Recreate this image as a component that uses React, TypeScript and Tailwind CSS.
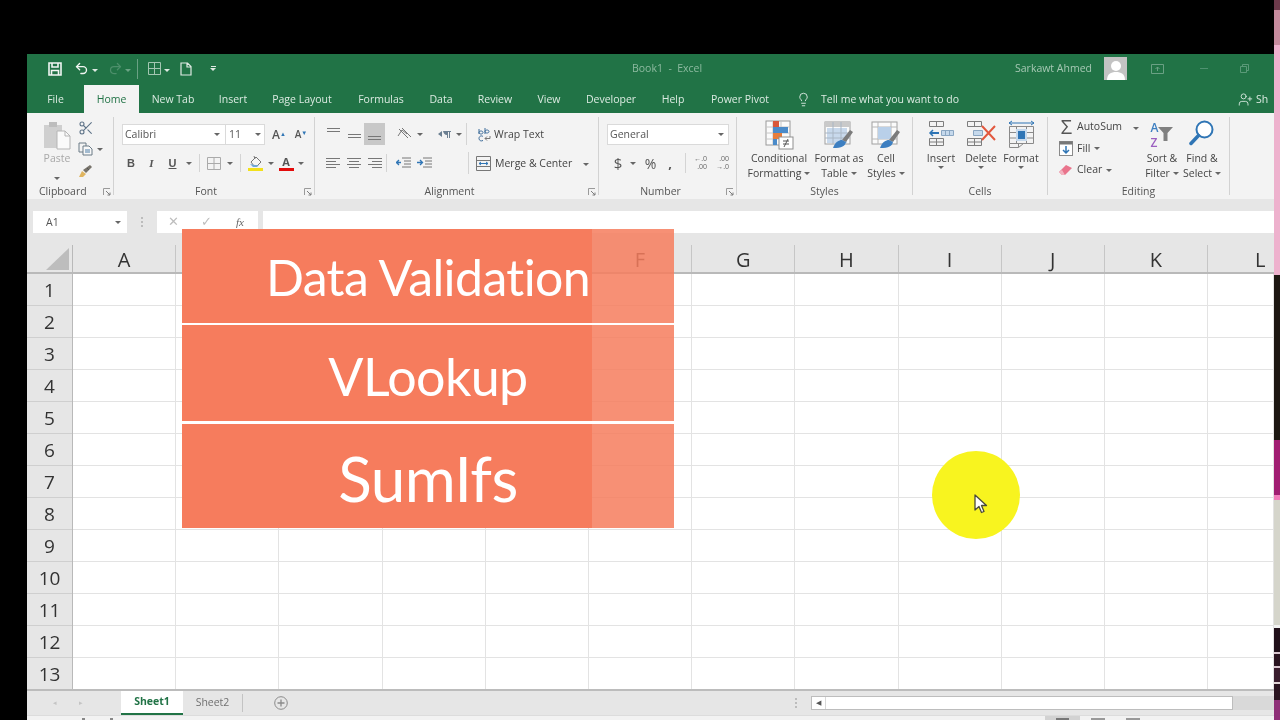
import React from "react";
import { Scissors, Undo2, Redo2, Lightbulb, UserPlus } from "lucide-react";

const ui = { fontFamily: '"Open Sans", "Noto Sans", sans-serif' };

const tabs = [
  { label: "File", w: "w-[57px]" },
  { label: "Home", w: "w-[55px]", active: true },
  { label: "New Tab", w: "w-[68px]" },
  { label: "Insert", w: "w-[52px]" },
  { label: "Page Layout", w: "w-[86px]" },
  { label: "Formulas", w: "w-[72px]" },
  { label: "Data", w: "w-[48px]" },
  { label: "Review", w: "w-[60px]" },
  { label: "View", w: "w-[48px]" },
  { label: "Developer", w: "w-[76px]" },
  { label: "Help", w: "w-[48px]" },
  { label: "Power Pivot", w: "w-[86px]" },
];

// B to E sit under the title card in the reference, so their letters never show
const columns = ["A", "", "", "", "", "F", "G", "H", "I", "J", "K", "L"];
const rows = [1, 2, 3, 4, 5, 6, 7, 8, 9, 10, 11, 12, 13];

function Caret({ light }: { light?: boolean }) {
  return (
    <span
      className={`inline-block w-0 h-0 border-x-[3px] border-x-transparent border-t-[3px] ${
        light ? "border-t-[#dfeae3]" : "border-t-[#666]"
      }`}
    />
  );
}

function Launcher() {
  return (
    <svg width="8" height="8" viewBox="0 0 8 8" fill="none">
      <path d="M0.5 7V0.5H7" stroke="#9a9a9a" />
      <path d="M3 3l4 4M7 4.5V7H4.5" stroke="#7d7d7d" />
    </svg>
  );
}

function Lines({ rows: r }: { rows: number[] }) {
  return (
    <svg width="15" height="14" viewBox="0 0 15 14">
      {r.map((y, i) => (
        <rect key={i} x={1} y={y} width="13" height="1" fill="#777" />
      ))}
    </svg>
  );
}

function AlignLines({ kind }: { kind: "l" | "c" | "r" }) {
  const xs = { l: [0, 0, 0, 0], c: [0, 2, 0, 2], r: [0, 4, 0, 4] }[kind];
  const ws = [14, 10, 14, 10];
  return (
    <svg width="14" height="12" viewBox="0 0 14 12">
      {xs.map((x, i) => (
        <rect key={i} x={x} y={1 + i * 3} width={ws[i]} height="1" fill="#777" />
      ))}
    </svg>
  );
}

function Sep({ h = "h-[18px]" }: { h?: string }) {
  return <div className={`w-px ${h} bg-[#d4d4d4]`} />;
}

function GroupLabel({ children, launcher, pad }: { children: React.ReactNode; launcher?: boolean; pad?: string }) {
  return (
    <div className={`h-[15px] flex items-center text-[10.5px] text-[#555] relative ${pad ?? "justify-center"}`}>
      <span>{children}</span>
      {launcher && (
        <span className="absolute right-[2px] top-[4px]">
          <Launcher />
        </span>
      )}
    </div>
  );
}

function Group({
  w,
  label,
  launcher,
  labelPad,
  children,
}: {
  w: string;
  label: string;
  launcher?: boolean;
  labelPad?: string;
  children: React.ReactNode;
}) {
  return (
    <div className={`${w} h-full flex shrink-0`}>
      <div className="flex-1 flex flex-col min-w-0">
        <div className="h-[71px]">{children}</div>
        <GroupLabel launcher={launcher} pad={labelPad}>
          {label}
        </GroupLabel>
      </div>
      <div className="w-px h-[78px] mt-[4px] bg-[#d2d2d2]" />
    </div>
  );
}

function PasteIcon() {
  return (
    <svg width="28" height="30" viewBox="0 0 28 30" fill="none">
      <rect x="1" y="5" width="18" height="23" fill="#cfcfcf" />
      <rect x="6" y="2" width="8" height="5" fill="#bdbdbd" />
      <path d="M14 11h8l5 5v13H14z" fill="#fafafa" stroke="#b5b5b5" />
      <path d="M22 11v5h5" stroke="#b5b5b5" />
    </svg>
  );
}

function CopyIcon() {
  return (
    <svg width="15" height="14" viewBox="0 0 15 14" fill="none" stroke="#6a7a86">
      <path d="M1 1h7v9H1z" fill="#f3f3f3" />
      <path d="M5 4h6l3 3v6H5z" fill="#f8f8f8" />
      <path d="M7 8h5M7 10h5" stroke="#4f7fa8" />
    </svg>
  );
}

function BrushIcon() {
  return (
    <svg width="16" height="14" viewBox="0 0 16 14">
      <path d="M1 13l3-6 4 3-3 3z" fill="#e0b560" />
      <path d="M5 6l3 3 6-6-2-2z" fill="#77736a" />
      <path d="M9 4l2 2" stroke="#555" />
    </svg>
  );
}

function FillIcon() {
  return (
    <svg width="16" height="17" viewBox="0 0 16 17" fill="none">
      <path d="M3 7l5-5 5 5-4 4H6z" fill="#f6f6f6" stroke="#777" />
      <path d="M6 1l1 3" stroke="#777" />
      <path d="M2 9c2 0 6 2 9 1l-2 2H5z" fill="#6fa7d8" />
      <rect x="0" y="13" width="15" height="3" fill="#f2e01b" />
    </svg>
  );
}

function ConditionalIcon() {
  return (
    <svg width="30" height="30" viewBox="0 0 30 30" fill="none">
      <rect x="2" y="1" width="24" height="24" fill="#fbfbfb" stroke="#9a9a9a" />
      <path d="M2 7h24M2 13h24M2 19h24M9 1v24M17 1v24" stroke="#c6c6c6" />
      <rect x="9" y="1" width="6" height="6" fill="#d8583b" />
      <rect x="9" y="7" width="15" height="6" fill="#4b8bc9" />
      <rect x="9" y="13" width="9" height="6" fill="#e77d3c" />
      <rect x="9" y="19" width="4" height="6" fill="#4b8bc9" />
      <rect x="15" y="17" width="14" height="12" fill="#fff" stroke="#8f8f8f" />
      <path d="M19 21h6M19 24h6M24 19l-4 8" stroke="#555" />
    </svg>
  );
}

function TableBrushIcon() {
  return (
    <svg width="30" height="30" viewBox="0 0 30 30" fill="none">
      <rect x="1" y="2" width="25" height="22" fill="#fbfbfb" stroke="#a0a0a0" />
      <rect x="1" y="2" width="25" height="5" fill="#c9c9c9" />
      <rect x="3" y="8" width="20" height="15" fill="#c8d9ec" />
      <path d="M1 13h25M1 18h25M9 2v22M17 2v22" stroke="#a9b6c4" />
      <path d="M18 20l8-10 3 2-7 10z" fill="#7b7b7b" />
      <path d="M9 28c2-6 6-8 9-8l4 2c-1 4-4 6-13 6z" fill="#3d7fc1" />
    </svg>
  );
}

function CellStyleIcon() {
  return (
    <svg width="30" height="30" viewBox="0 0 30 30" fill="none">
      <rect x="1" y="2" width="25" height="22" fill="#fbfbfb" stroke="#a0a0a0" />
      <path d="M1 7h25M1 19h25M7 2v22M20 2v22" stroke="#b7b7b7" />
      <rect x="7" y="7" width="13" height="12" fill="#b9d0e9" />
      <path d="M18 20l8-10 3 2-7 10z" fill="#7b7b7b" />
      <path d="M9 28c2-6 6-8 9-8l4 2c-1 4-4 6-13 6z" fill="#3d7fc1" />
    </svg>
  );
}

function InsertIcon() {
  return (
    <svg width="27" height="27" viewBox="0 0 27 27" fill="none" stroke="#7d7d7d">
      <path d="M1.5 1.5h14v5h-14zM8.5 1.5v5M1.5 18.5h14v7h-14zM1.5 22h14M8.5 18.5v7" />
      <path d="M13.5 10.5h12v5h-12z" fill="#c6d9ec" stroke="#8aa6c2" />
      <path d="M17.5 10.5v5M21.5 10.5v5" stroke="#8aa6c2" />
      <path d="M2 13h9" stroke="#2f75b5" strokeWidth="2" />
      <path d="M5 10l-3 3 3 3" stroke="#2f75b5" strokeWidth="1.5" />
    </svg>
  );
}

function DeleteIcon() {
  return (
    <svg width="30" height="27" viewBox="0 0 30 27" fill="none" stroke="#7d7d7d">
      <path d="M1.5 1.5h14v5h-14zM8.5 1.5v5M1.5 18.5h14v7h-14zM1.5 22h14M8.5 18.5v7" />
      <path d="M7.5 10.5h9v5h-9z" fill="#c6d9ec" stroke="#8aa6c2" />
      <path d="M16 6l13 14M29 6L16 20" stroke="#e2583e" strokeWidth="2" />
    </svg>
  );
}

function FormatIcon() {
  return (
    <svg width="27" height="30" viewBox="0 0 27 30" fill="none" stroke="#8a8a8a">
      <path d="M1.5 6.5h24v17h-24zM1.5 12.5h24M1.5 18h24M8.5 6.5v17M18.5 6.5v17" />
      <rect x="9" y="10" width="9" height="10" fill="#2f75b5" stroke="#c6d9ec" strokeWidth="2" />
      <path d="M1 3h25M4 1L1 3l3 2M23 1l3 2-3 2" stroke="#2f75b5" />
      <path d="M1.5 23.5v4h9v-4M10.5 27.5l5-4" />
    </svg>
  );
}

function WrapIcon() {
  return (
    <svg width="15" height="15" viewBox="0 0 15 15" fill="none">
      <path d="M2 7V2M2 5.500c0-2 4-2 4 0S2 7.500 2 5.500zM1 1h0" stroke="#3a6a99" />
      <path d="M8 1v6M8 4.500c0-2 4-2 4 0s-4 2-4 0z" stroke="#3a6a99" />
      <path d="M6 9.500c-2-1.500-4 0-4 2s2 3 4 2" stroke="#3a6a99" />
      <path d="M13 9v2.500H8M10 9.500l-2 2 2 2" stroke="#777" />
    </svg>
  );
}

function StackButton({
  w,
  icon,
  lines,
  caretOwn,
}: {
  w: string;
  icon: React.ReactNode;
  lines: string[];
  caretOwn?: boolean;
}) {
  return (
    <div className={`${w} shrink-0 flex flex-col items-center pt-[7px] text-[10.5px] leading-[15px] text-[#444] whitespace-nowrap`}>
      <div className="h-[30px] flex items-start justify-center">{icon}</div>
      <div className="mt-[1px]">{lines[0]}</div>
      <div className="flex items-center gap-[3px]">
        {lines[1] && <span>{lines[1]}</span>}
        {caretOwn && <Caret />}
      </div>
    </div>
  );
}

function Ribbon() {
  return (
    <div className="h-[86px] bg-[#f3f3f3] flex shrink-0">
      {/* Clipboard */}
      <Group w="w-[87px]" label="Clipboard" launcher labelPad="justify-start pl-[12px]">
        <div className="flex pl-[15px] pt-[7px]">
          <div className="w-[30px] flex flex-col items-center text-[10.5px] text-[#a8a8a8]">
            <PasteIcon />
            <span className="mt-[1px] leading-[15px]">Paste</span>
            <span className="mt-[3px]"><Caret /></span>
          </div>
          <div className="ml-[6px] flex flex-col gap-[4px]">
            <Scissors size={16} strokeWidth={1.6} className="text-[#5d7287]" />
            <div className="flex items-center gap-[4px] mt-[2px]">
              <CopyIcon />
              <Caret />
            </div>
            <div className="mt-[4px]"><BrushIcon /></div>
          </div>
        </div>
      </Group>

      {/* Font */}
      <Group w="w-[201px]" label="Font" launcher labelPad="justify-center pr-[16px]">
        <div className="pl-[8px] pt-[11px] text-[#555]">
          <div className="flex items-center h-[21px]">
            <div className="w-[104px] h-[21px] bg-white border border-[#dadada] flex items-center justify-between pl-[2px] pr-[5px] text-[10.5px]">
              <span>Calibri</span>
              <Caret />
            </div>
            <div className="w-[39px] h-[21px] bg-white border border-l-0 border-[#dadada] flex items-center justify-between pl-[3px] pr-[3px] text-[10.5px]">
              <span>11</span>
              <Caret />
            </div>
            <div className="w-[24px] ml-[2px] text-center text-[12px] font-semibold">A<sup className="text-[6px] text-[#2f75b5]">▲</sup></div>
            <div className="w-[20px] text-center text-[10px] font-semibold">A<sup className="text-[6px] text-[#2f75b5]">▼</sup></div>
          </div>
          <div className="flex items-center h-[22px] mt-[7px] text-[11px] font-bold">
            <span className="w-[18px] text-center" style={{ fontFamily: '"Liberation Sans", sans-serif' }}>B</span>
            <span className="w-[21px] ml-[1px] text-center italic" style={{ fontFamily: '"Liberation Serif", serif' }}>I</span>
            <span className="w-[21px] text-center underline" style={{ fontFamily: '"Liberation Sans", sans-serif' }}>U</span>
            <span className="w-[12px] flex justify-center"><Caret /></span>
            <span className="w-[5px] ml-[4px]"><Sep /></span>
            <svg className="ml-[3px]" width="14" height="13" viewBox="0 0 14 13" fill="none" stroke="#aaa">
              <path d="M.5.5h13v12H.5zM7 .5v12M.5 6.5h13" />
            </svg>
            <span className="w-[16px] ml-[1px] flex justify-center"><Caret /></span>
            <span className="w-[5px] ml-[2px]"><Sep /></span>
            <span className="ml-[3px]"><FillIcon /></span>
            <span className="w-[13px] flex justify-center"><Caret /></span>
            <span className="w-[16px] ml-[1px] flex flex-col items-center leading-[12px] text-[#555]">
              A
              <span className="block w-[15px] h-[3px] bg-[#e30b0b]" />
            </span>
            <span className="w-[14px] flex justify-center"><Caret /></span>
          </div>
        </div>
      </Group>

      {/* Alignment */}
      <Group w="w-[284px]" label="Alignment" launcher labelPad="justify-center pr-[14px]">
        <div className="pl-[11px] pt-[10px] text-[#444]">
          <div className="flex items-center h-[22px]">
            <span className="w-[14px]"><Lines rows={[1, 4]} /></span>
            <span className="w-[15px] ml-[7px] pt-[1px]"><Lines rows={[6, 9]} /></span>
            <span className="w-[21px] h-[22px] ml-[2px] bg-[#c8c8c8] flex items-center justify-center pt-[4px]"><Lines rows={[7, 10]} /></span>
            <svg className="ml-[12px]" width="16" height="14" viewBox="0 0 16 14" fill="none" stroke="#777">
              <path d="M2 2l9 9M5 1l9 9M1 9l4-6 5 4" />
            </svg>
            <span className="w-[12px] ml-[1px] flex justify-center"><Caret /></span>
            <span className="w-[12px]" />
            <svg width="14" height="10" viewBox="0 0 14 10" fill="#6b7f91">
              <path d="M0 5l4-3v6zM5 2h8v1h-1v6h-1V3h-1v6H9V6C6.500 6 5.500 4 5 2z" />
            </svg>
            <span className="w-[14px] flex justify-center"><Caret /></span>
            <span className="w-[11px] flex justify-start"><Sep h="h-[22px]" /></span>
            <div className="flex items-center gap-[2px] text-[10.5px] whitespace-nowrap">
              <WrapIcon />
              <span className="pt-[1px]">Wrap Text</span>
            </div>
          </div>
          <div className="flex items-center h-[22px] mt-[7px]">
            <span className="w-[14px]"><AlignLines kind="l" /></span>
            <span className="w-[14px] ml-[7px]"><AlignLines kind="c" /></span>
            <span className="w-[14px] ml-[7px]"><AlignLines kind="r" /></span>
            <span className="w-[7px] ml-[4px]"><Sep /></span>
            <svg width="15" height="12" viewBox="0 0 15 12" fill="none" className="ml-[3px]">
              <path d="M6 1h9M8 4h7M8 7h7M6 10h9" stroke="#777" />
              <path d="M0 5.500h5M3 3L0.500 5.500 3 8" stroke="#2f75b5" strokeWidth="1.3" />
            </svg>
            <svg width="15" height="12" viewBox="0 0 15 12" fill="none" className="ml-[6px]">
              <path d="M6 1h9M8 4h7M8 7h7M6 10h9" stroke="#777" />
              <path d="M0 5.500h5M3 3l2.500 2.500L3 8" stroke="#2f75b5" strokeWidth="1.3" />
            </svg>
            <span className="w-[5px] ml-[36px] flex justify-start"><Sep h="h-[22px]" /></span>
            <div className="ml-[3px] flex items-center gap-[4px] text-[10.5px] whitespace-nowrap">
              <svg width="15" height="15" viewBox="0 0 15 15" fill="none" stroke="#777">
                <path d="M.5.5h14v14H.5zM.5 4.500h14M.5 10.500h14" />
                <path d="M3 7.500h9M5 6l-2 1.500L5 9M10 6l2 1.500L10 9" stroke="#2f75b5" />
              </svg>
              <span className="pt-[1px]">Merge &amp; Center</span>
              <span className="ml-[7px]"><Caret /></span>
            </div>
          </div>
        </div>
      </Group>

      {/* Number */}
      <Group w="w-[138px]" label="Number" launcher labelPad="justify-center pr-[14px]">
        <div className="pl-[8px] pt-[11px] text-[#555]">
          <div className="w-[122px] h-[21px] bg-white border border-[#dadada] flex items-center justify-between pl-[2px] pr-[4px] text-[10.5px]">
            <span>General</span>
            <Caret />
          </div>
          <div className="flex items-center h-[22px] mt-[7px]">
            <span className="w-[20px] ml-[1px] text-center text-[15px]">$</span>
            <span className="w-[10px] flex justify-center"><Caret /></span>
            <span className="w-[25px] text-center text-[14px]">%</span>
            <span className="w-[14px] text-center text-[13px] font-bold leading-[12px]">,</span>
            <span className="w-[4px] ml-[8px]"><Sep h="h-[20px]" /></span>
            <span className="w-[18px] flex flex-col text-[7px] leading-[8px] text-[#666] text-right"><span>←.0</span><span>.00</span></span>
            <span className="w-[18px] ml-[4px] flex flex-col text-[7px] leading-[8px] text-[#666] text-right"><span>.00</span><span>→.0</span></span>
          </div>
        </div>
      </Group>

      {/* Styles */}
      <Group w="w-[176px]" label="Styles">
        <div className="flex pl-[8px]">
          <StackButton w="w-[68px]" icon={<ConditionalIcon />} lines={["Conditional", "Formatting"]} caretOwn />
          <StackButton w="w-[52px]" icon={<TableBrushIcon />} lines={["Format as", "Table"]} caretOwn />
          <StackButton w="w-[42px]" icon={<CellStyleIcon />} lines={["Cell", "Styles"]} caretOwn />
        </div>
      </Group>

      {/* Cells */}
      <Group w="w-[135px]" label="Cells">
        <div className="flex pl-[8px]">
          <StackButton w="w-[40px]" icon={<InsertIcon />} lines={["Insert", ""]} caretOwn />
          <StackButton w="w-[40px]" icon={<DeleteIcon />} lines={["Delete", ""]} caretOwn />
          <StackButton w="w-[40px]" icon={<FormatIcon />} lines={["Format", ""]} caretOwn />
        </div>
      </Group>

      {/* Editing */}
      <Group w="w-[182px]" label="Editing">
        <div className="flex pl-[11px]">
          <div className="w-[85px] pt-[6px] text-[10.5px] text-[#444] flex flex-col gap-[5.500px]">
            <div className="flex items-center h-[16px] gap-[3px]">
              <span className="w-[15px] text-[20px] leading-[16px] text-[#555] text-center">Σ</span>
              <span>AutoSum</span>
              <span className="ml-[8px]"><Caret /></span>
            </div>
            <div className="flex items-center h-[16px] gap-[4px]">
              <svg width="14" height="15" viewBox="0 0 14 15" fill="none">
                <rect x=".5" y=".5" width="13" height="14" fill="#fff" stroke="#8a8a8a" />
                <rect x=".5" y=".5" width="13" height="3" fill="#777" />
                <path d="M7 5v7M4 9l3 3 3-3" stroke="#2f75b5" strokeWidth="1.5" />
              </svg>
              <span>Fill</span>
              <Caret />
            </div>
            <div className="flex items-center h-[16px] gap-[4px]">
              <svg width="14" height="12" viewBox="0 0 14 12">
                <path d="M0 8l7-7 6 3-7 7H3z" fill="#e9748c" />
                <path d="M0 8l3 3h3L3 6z" fill="#f3b3c0" />
              </svg>
              <span>Clear</span>
              <Caret />
            </div>
          </div>
          <div className="w-[40px] -ml-[2px] flex flex-col items-center pt-[7px] text-[10.5px] leading-[15px] text-[#444] whitespace-nowrap">
            <div className="h-[30px] flex items-start">
              <div className="flex flex-col text-[12px] leading-[15px] font-semibold">
                <span className="text-[#3d7fc1]">A</span>
                <span className="text-[#9b5fc0]">Z</span>
              </div>
              <svg className="mt-[7px]" width="15" height="14" viewBox="0 0 15 14">
                <path d="M0 0h15L9.500 6v8h-4V6z" fill="#808080" />
              </svg>
            </div>
            <div className="mt-[1px]">Sort &amp;</div>
            <div className="flex items-center gap-[3px]">Filter <Caret /></div>
          </div>
          <div className="w-[40px] flex flex-col items-center pt-[7px] text-[10.5px] leading-[15px] text-[#444] whitespace-nowrap">
            <div className="h-[30px]">
              <svg width="26" height="26" viewBox="0 0 26 26" fill="none">
                <circle cx="15.500" cy="9.500" r="8" stroke="#2f75b5" strokeWidth="2" fill="#fff" />
                <path d="M9.500 15.500L2 23.500" stroke="#2f75b5" strokeWidth="3.500" strokeLinecap="round" />
              </svg>
            </div>
            <div className="mt-[1px]">Find &amp;</div>
            <div className="flex items-center gap-[3px]">Select <Caret /></div>
          </div>
        </div>
      </Group>
    </div>
  );
}

function TitleBar() {
  return (
    <div className="h-[31px] bg-[#217346] flex items-center shrink-0 pb-[2px] text-[#a9cbb7] text-[10.5px]">
      <svg className="ml-[21px]" width="14" height="14" viewBox="0 0 14 14" fill="none" stroke="#f1f6f3" strokeWidth="1.6">
        <path d="M1 1h12v12H1zM4 1v4h6V1M3.500 13V8.500h7V13" />
      </svg>
      <Undo2 className="ml-[12px] text-[#f1f6f3]" size={15} strokeWidth={2.2} />
      <span className="ml-[3px]"><Caret light /></span>
      <Redo2 className="ml-[10px] text-[#4d8f6b]" size={15} strokeWidth={2} />
      <span className="ml-[2px] opacity-40"><Caret light /></span>
      <div className="w-px h-[20px] bg-[#6aa184] ml-[6px]" />
      <svg className="ml-[10px]" width="13" height="13" viewBox="0 0 13 13" fill="none" stroke="#a3c6b1">
        <path d="M.5.5h12v12H.5zM6.500.5v12M.5 6.500h12" />
      </svg>
      <span className="ml-[3px]"><Caret light /></span>
      <svg className="ml-[10px]" width="12" height="14" viewBox="0 0 12 14" fill="none" stroke="#dfeae3" strokeWidth="1.2">
        <path d="M1 1h6.500L11 4.500V13H1zM7 1v4h4" />
      </svg>
      <div className="ml-[18px] flex flex-col items-center gap-[1px]">
        <div className="w-[5px] h-px bg-[#dfeae3]" />
        <Caret light />
      </div>
      <div className="ml-[416px] w-[74px] whitespace-nowrap text-[#8dbaa0]">Book1&nbsp; -&nbsp; Excel</div>
      <div className="ml-[309px] w-[80px] whitespace-nowrap text-[#a6c8b4]">Sarkawt Ahmed</div>
      <div className="ml-[9px] w-[23px] h-[23px] bg-[#c3c3c3] flex items-end justify-center overflow-hidden">
        <svg width="18" height="20" viewBox="0 0 18 20" fill="#fff">
          <circle cx="9" cy="6" r="5" />
          <path d="M0 20c0-6 4-8 9-8s9 2 9 8z" />
        </svg>
      </div>
      <svg className="ml-[24px]" width="13" height="10" viewBox="0 0 13 10" fill="none" stroke="#6aa184">
        <path d="M.5.5h12v9H.5zM6.500 7V3M4.500 5l2-2 2 2" />
      </svg>
      <div className="ml-[36px] w-[8px] h-px bg-[#4f9270]" />
      <svg className="ml-[32px]" width="9" height="9" viewBox="0 0 9 9" fill="none" stroke="#5a9a78">
        <path d="M.5 2.500h6v6h-6zM2.500 2.500v-2h6v6h-2" />
      </svg>
    </div>
  );
}

function TabBar() {
  return (
    <div className="h-[28px] bg-[#217346] flex items-stretch shrink-0 text-[10.5px] text-[#dcebe2] overflow-hidden">
      {tabs.map((t) => (
        <div
          key={t.label}
          className={`${t.w} shrink-0 flex items-center justify-center pt-[1px] ${
            t.active ? "bg-[#f3f3f3] text-[#217346]" : ""
          }`}
        >
          {t.label}
        </div>
      ))}
      <Lightbulb className="ml-[13px] mt-[7px] shrink-0 text-[#e6f0ea]" size={15} strokeWidth={1.4} />
      <div className="ml-[10px] flex items-center whitespace-nowrap pt-[1px]">Tell me what you want to do</div>
      <UserPlus className="ml-[279px] mt-[7px] text-[#dcebe2] shrink-0" size={15} strokeWidth={1.4} />
      <div className="flex items-center ml-[3px] pt-[1px]">Sh</div>
    </div>
  );
}

function FormulaBar() {
  return (
    <div className="h-[34px] bg-[#e6e6e6] flex shrink-0 pt-[12px] text-[10.5px] text-[#555]">
      <div className="ml-[6px] w-[94px] h-[22px] bg-white flex items-center justify-between pl-[13px] pr-[6px] pt-[1px]">
        <span>A1</span>
        <Caret />
      </div>
      <div className="w-[30px] flex flex-col items-center justify-center gap-[2px]">
        <div className="w-[2px] h-[2px] bg-[#bcbcbc]" />
        <div className="w-[2px] h-[2px] bg-[#bcbcbc]" />
        <div className="w-[2px] h-[2px] bg-[#bcbcbc]" />
      </div>
      <div className="w-[101px] h-[22px] bg-white flex items-center text-[#bdbdbd]">
        <span className="ml-[11px] text-[13px]">✕</span>
        <span className="ml-[22px] text-[13px]">✓</span>
        <span className="ml-[24px] text-[#666] italic text-[11px]" style={{ fontFamily: '"Liberation Serif", serif' }}>fx</span>
      </div>
      <div className="ml-[5px] flex-1 h-[22px] bg-white" />
    </div>
  );
}

function ColumnHeader() {
  return (
    <div className="h-[41px] bg-[#e6e6e6] flex shrink-0 pt-[12px] border-b-2 border-[#b9b9b9]">
      <div className="w-[46px] shrink-0 border-r border-[#b9b9b9] flex justify-end pr-[3px] pt-[3px]">
        <svg width="23" height="22" viewBox="0 0 23 22">
          <path d="M23 0v22H0z" fill="#bdbdbd" />
        </svg>
      </div>
      <div className="flex-1 grid grid-cols-[repeat(11,103.2px)_1fr]">
        {columns.map((c, i) => (
          <div
            key={i}
            className={`flex items-center pt-[2px] text-[20px] leading-none text-[#333] ${
              c === "L" ? "justify-start pl-[47px]" : "justify-center border-r border-[#c6c6c6]"
            }`}
          >
            {c}
          </div>
        ))}
      </div>
    </div>
  );
}

function Sheet() {
  return (
    <div className="h-[415px] flex shrink-0 bg-white overflow-hidden">
      <div className="w-[46px] shrink-0 bg-[#e6e6e6] border-r border-[#b9b9b9]">
        {rows.map((r) => (
          <div key={r} className="h-[32px] border-b border-[#cfcfcf] flex items-center justify-center pt-[2px] text-[19px] leading-none text-[#333]">
            {r}
          </div>
        ))}
      </div>
      <div className="flex-1 grid grid-cols-[repeat(11,103.2px)_1fr] auto-rows-[32px]">
        {rows.flatMap((r) =>
          columns.map((c, i) => <div key={`${i}-${r}`} className="border-r border-b border-[#e3e3e3]" />)
        )}
      </div>
    </div>
  );
}

function SheetBar() {
  return (
    <div className="h-[26px] bg-[#e6e6e6] border-t-2 border-[#bcbcbc] flex items-stretch shrink-0 text-[10.5px]">
      <span className="ml-[26px] self-center text-[7px] text-[#c4c4c4]">◂</span>
      <span className="ml-[22px] self-center text-[7px] text-[#c4c4c4]">▸</span>
      <div className="ml-[38px] w-[62px] bg-white border-b-2 border-[#217346] flex items-center justify-center font-bold text-[#217346]">
        Sheet1
      </div>
      <div className="w-[59px] flex items-center justify-center text-[#707070]">Sheet2</div>
      <div className="w-px h-[18px] self-center bg-[#c3c3c3]" />
      <svg className="ml-[31px] self-center" width="14" height="14" viewBox="0 0 14 14" fill="none" stroke="#8a8a8a">
        <circle cx="7" cy="7" r="6.300" />
        <path d="M7 3.500v7M3.500 7h7" strokeWidth="1.300" />
      </svg>
      <div className="ml-[507px] self-center flex flex-col gap-[2px]">
        <div className="w-[2px] h-[2px] bg-[#bcbcbc]" />
        <div className="w-[2px] h-[2px] bg-[#bcbcbc]" />
        <div className="w-[2px] h-[2px] bg-[#bcbcbc]" />
      </div>
      <div className="ml-[14px] w-[422px] h-[14px] self-center bg-white border border-[#bdbdbd] flex">
        <div className="w-[14px] border-r border-[#d8d8d8] flex items-center justify-center text-[7px] text-[#555]">◀</div>
      </div>
      <div className="flex-1 h-[14px] self-center bg-[#d9d9d9]" />
    </div>
  );
}

function StatusBar() {
  return (
    <div className="flex-1 bg-[#f2f2f2] border-t border-[#dcdcdc] flex items-start">
      <div className="ml-[55px] mt-[2px] w-[3px] h-[2px] bg-[#888]" />
      <div className="ml-[25px] mt-[2px] w-[3px] h-[2px] bg-[#888]" />
      <div className="ml-[932px] w-[35px] h-full bg-[#d2d2d2] flex justify-center pt-[2px]">
        <div className="w-[13px] h-[2px] bg-[#777]" />
      </div>
      <div className="ml-[11px] mt-[2px] w-[14px] h-[2px] bg-[#999]" />
      <div className="ml-[21px] mt-[2px] w-[14px] h-[2px] bg-[#999]" />
    </div>
  );
}

function RightStrip() {
  return (
    <div className="w-[6px] h-full flex flex-col shrink-0">
      <div className="h-[10px] bg-[#6d3a4b]" />
      <div className="h-[35px] bg-[#c78b9e]" />
      <div className="h-[230px] bg-[#eeb1cd]" />
      <div className="h-[165px] bg-[#1d1712]" />
      <div className="h-[55px] bg-[#a11e72]" />
      <div className="h-[5px] bg-[#f27dbb]" />
      <div className="h-[125px] bg-[#d5d5cb]" />
      <div className="h-[3px] bg-[#f2f2f2]" />
      <div className="h-[24px] bg-[#21101a]" />
      <div className="h-[2px] bg-[#d9c6cf]" />
      <div className="h-[12px] bg-[#2a1420]" />
      <div className="h-[2px] bg-[#d9c6cf]" />
      <div className="h-[14px] bg-[#3a1d2e]" />
      <div className="h-[2px] bg-[#e1d4d6]" />
      <div className="h-[16px] bg-[#2a1420]" />
      <div className="flex-1 bg-[#8f2f78]" />
    </div>
  );
}

function Band({ h, size, label }: { h: string; size: string; label: string }) {
  return (
    <div className={`${h} relative flex`}>
      <div className="w-[410px] bg-[#f67c5d]" />
      <div className="w-[82px] bg-[#f67c5d]/85" />
      <div
        className={`absolute inset-0 flex items-center justify-center text-white ${size}`}
        style={{ fontFamily: 'Lato, "Noto Sans", sans-serif' }}
      >
        {label}
      </div>
    </div>
  );
}

export default function App() {
  return (
    <div className="relative w-[1280px] h-[720px] bg-black overflow-hidden flex blur-[0.3px]" style={ui}>
      <div className="w-[27px] shrink-0" />
      <div className="w-[1247px] h-full pt-[54px] shrink-0">
        <div className="h-full flex flex-col overflow-hidden">
          <TitleBar />
          <TabBar />
          <Ribbon />
          <FormulaBar />
          <ColumnHeader />
          <Sheet />
          <SheetBar />
          <StatusBar />
        </div>
      </div>
      <RightStrip />

      {/* title card laid over the sheet */}
      <div className="absolute left-[182px] top-[229px] w-[492px] flex flex-col">
        <Band h="h-[94px]" size="text-[50px] tracking-[-0.6px] pt-[2px]" label="Data Validation" />
        <div className="h-[2px] bg-white" />
        <Band h="h-[96px]" size="text-[52px] tracking-[-0.6px] pt-[5px]" label="VLookup" />
        <div className="h-[3px] bg-white" />
        <Band h="h-[104px]" size="text-[62px] tracking-[-0.6px] pt-[4px]" label="SumIfs" />
      </div>

      {/* cursor highlight */}
      <div className="absolute left-[932px] top-[451px] w-[88px] h-[88px] rounded-full bg-[#f8f41f] flex items-start justify-start">
        <svg className="ml-[42px] mt-[43px]" width="14" height="20" viewBox="0 0 14 20">
          <path d="M1 1v15l4-3.500 2.500 6 2.500-1-2.500-6h5z" fill="#fff" stroke="#4a4a3a" strokeWidth="1.300" strokeLinejoin="round" />
        </svg>
      </div>
    </div>
  );
}
